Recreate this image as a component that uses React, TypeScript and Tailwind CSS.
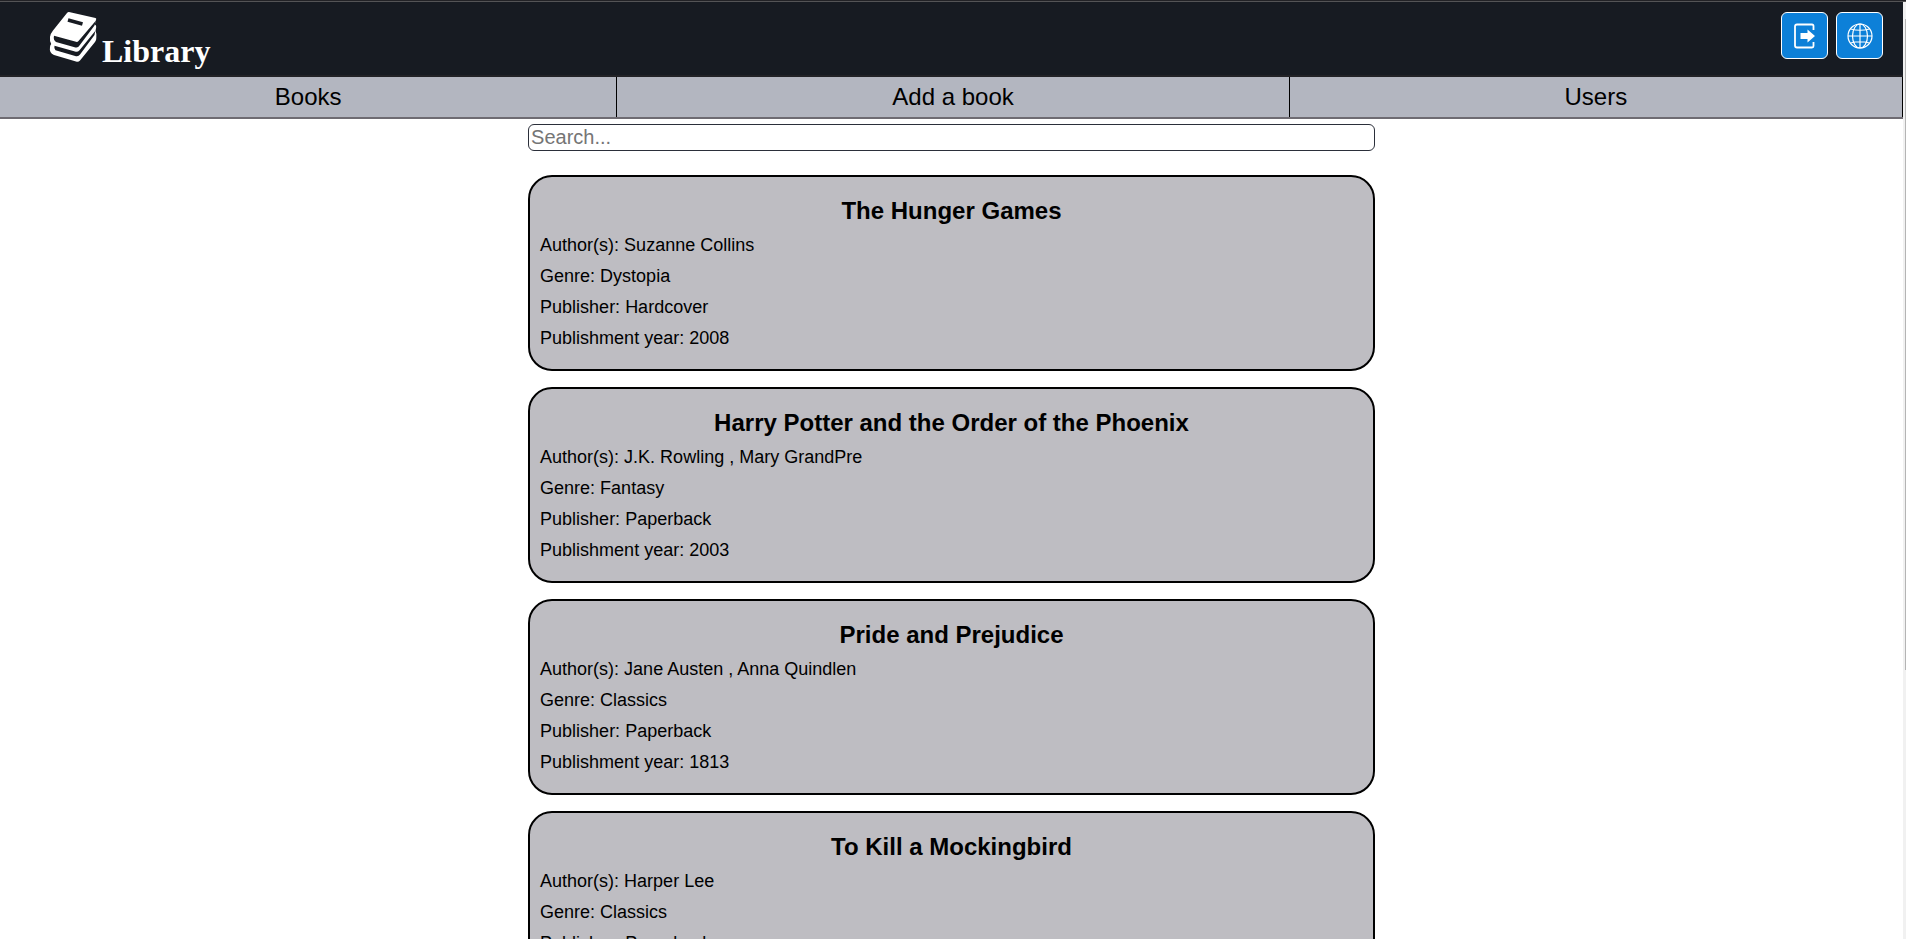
const books = [
  { title: "The Hunger Games", authors: "Suzanne Collins", genre: "Dystopia", publisher: "Hardcover", year: 2008 },
  { title: "Harry Potter and the Order of the Phoenix", authors: "J.K. Rowling , Mary GrandPre", genre: "Fantasy", publisher: "Paperback", year: 2003 },
  { title: "Pride and Prejudice", authors: "Jane Austen , Anna Quindlen", genre: "Classics", publisher: "Paperback", year: 1813 },
  { title: "To Kill a Mockingbird", authors: "Harper Lee", genre: "Classics", publisher: "Paperback", year: 1960 },
];

type Book = (typeof books)[number];

function BooksLogo() {
  return (
    <svg viewBox="0 0 48 52" className="h-13 w-12" aria-hidden="true">
      <path
        d="M20 1 46.500 7 Q47.800 7.500 47 9 L45.800 13.500 Q47.500 14 47.200 16 L46.500 20 Q48 23 47.300 27 Q47.500 29 46 31 L31 49.500 Q29.500 51.200 27 50.500 L5 44 Q0 42 1 36 Q1.200 34 2.200 33 Q.5 30.500 1 26 Q1.500 22.500 4 19.500 L18 2 Q19 .8 20 1Z"
        fill="#fff"
      />
      <path d="M19 9 33.500 13" stroke="#171b22" strokeWidth="3.600" />
      <path d="M5 24.800 27 30.800 Q28.500 31.200 29.500 30 L47 9.500 45.500 14.500 30.500 34.500 Q29 37 26.500 36.400 L7 31 Q4 29 5 24.800Z" fill="#171b22" />
      <path d="M5.500 34.800 26 40.600 Q28.700 41.300 30.300 39.500 L46.200 20 45.500 24 31 43.500 Q29.500 45.800 27 45.200 L6.500 39.300 Q4.700 37.500 5.500 34.800Z" fill="#171b22" />
    </svg>
  );
}

function ExitIcon() {
  return (
    <svg viewBox="0 0 24 26" className="h-[26px] w-6" fill="none" aria-hidden="true">
      <path d="M20.500 7V3Q20.500 1.500 19 1.500H4Q2 1.500 2 3.500V22.500Q2 24.500 4 24.500H19Q20.500 24.500 20.500 23V19" stroke="#fff" strokeWidth="1.800" />
      <path d="M7.500 10H14.500V6.500L22 13 14.500 19.500V16H7.500Z" fill="#fff" />
    </svg>
  );
}

function GlobeIcon() {
  return (
    <svg viewBox="0 0 26 26" className="size-[26px]" fill="none" stroke="#fff" strokeWidth="1.200" aria-hidden="true">
      <circle cx="13" cy="13" r="12" />
      <ellipse cx="13" cy="13" rx="7.500" ry="12" />
      <path d="M13 1V25M1 13H25M3.500 6Q13 8.500 22.500 6M3.500 20Q13 17.500 22.500 20" />
    </svg>
  );
}

const iconButton =
  "flex size-[47px] items-center justify-center rounded-md border border-white bg-[#0d80d8]";

function BookCard({ book }: { book: Book }) {
  return (
    <article className="shrink-0 rounded-3xl border-2 border-black bg-[#bebdc2] px-[10px] pt-5 pb-[15px]">
      <h2 className="text-center text-2xl leading-[28px] font-bold">{book.title}</h2>
      <div className="pt-[5px] text-lg leading-[31px]">
        <p>Author(s): {book.authors}</p>
        <p>Genre: {book.genre}</p>
        <p>Publisher: {book.publisher}</p>
        <p>Publishment year: {book.year}</p>
      </div>
    </article>
  );
}

export default function App() {
  return (
    <div className="flex h-screen overflow-hidden bg-white font-['Liberation_Sans',Arial,sans-serif] text-black">
      <div className="flex min-w-0 flex-1 flex-col">
        <header className="flex h-[77px] shrink-0 items-start justify-between border-b-2 border-[#222226] bg-[#171b22] pr-5 pl-[49px]">
          <a href="#home" className="flex items-start gap-[5px] pt-[11px] text-white">
            <BooksLogo />
            <span className="pt-[22px] font-['Liberation_Serif','Times_New_Roman',serif] text-[32px] leading-[36px] font-bold">
              Library
            </span>
          </a>
          <div className="flex gap-2 pt-3">
            <button type="button" aria-label="Log out" className={iconButton}>
              <ExitIcon />
            </button>
            <button type="button" aria-label="Language" className={iconButton}>
              <GlobeIcon />
            </button>
          </div>
        </header>
        <nav className="flex h-[42px] shrink-0 border-b-2 border-[#6e6b72] bg-[#b3b6c0] text-center text-2xl leading-[40px]">
          <a href="#books" className="flex-auto border-r border-black">Books</a>
          <a href="#add" className="flex-auto border-r border-black">Add a book</a>
          <a href="#users" className="flex-auto border-r border-black">Users</a>
        </nav>
        <main className="mx-auto flex min-h-0 w-[44.5%] flex-1 flex-col overflow-hidden pt-[5px]">
          <input
            type="search"
            aria-label="Search"
            placeholder="Search..."
            className="h-[27px] w-full shrink-0 rounded-md border border-[#2b2f3a] px-[2px] text-xl leading-6 placeholder:text-[#757575]"
          />
          <div className="flex flex-col gap-4 pt-6">
            {books.map((book) => (
              <BookCard key={book.title} book={book} />
            ))}
          </div>
        </main>
      </div>
      <div className="w-[3px] shrink-0 bg-[#f1f1f1] pt-[19px]" aria-hidden="true">
        <div className="ml-auto h-[651px] w-px bg-[#b4b4b4]" />
      </div>
      <div className="absolute inset-x-0 top-0 h-[2px] border-b border-[#545456] bg-[#222226]" />
    </div>
  );
}
